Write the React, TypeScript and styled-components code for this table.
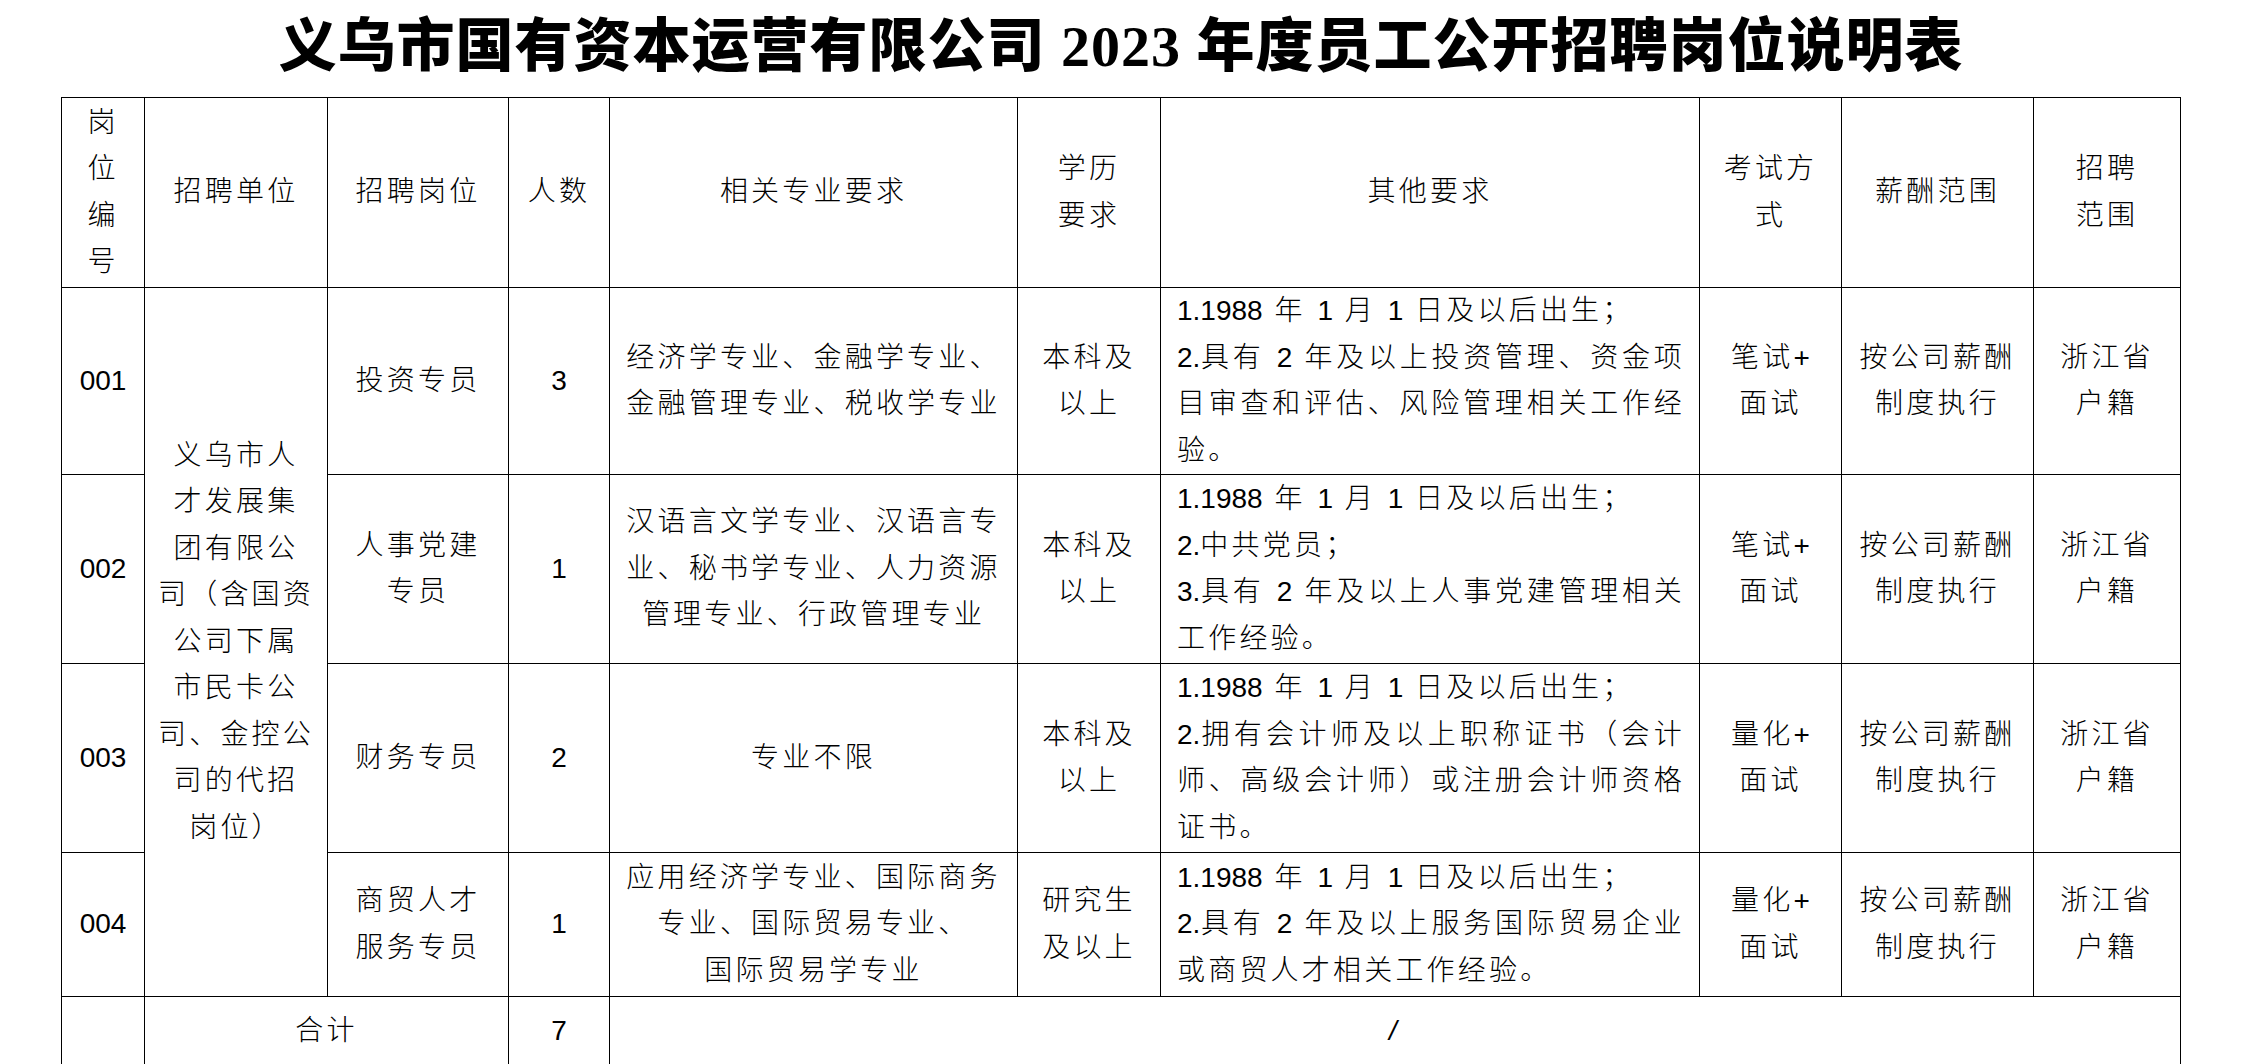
import React from "react";
import styled, { createGlobalStyle, css } from "styled-components";

/**
 * 招聘岗位说明表
 */
type Post = {
    no: string;
    post: string[];
    count: string;
    major: string[];
    edu: string[];
    other: string[][]; // 每段若干行，除末行外两端对齐
    exam: string[];
    height: number;
};

const born = ["1.1988 年 1 月 1 日及以后出生；"];

const unit = ["义乌市人", "才发展集", "团有限公", "司（含国资", "公司下属", "市民卡公", "司、金控公", "司的代招", "岗位）"];

const posts: Post[] = [
    {
        no: "001",
        post: ["投资专员"],
        count: "3",
        major: ["经济学专业、金融学专业、", "金融管理专业、税收学专业"],
        edu: ["本科及", "以上"],
        other: [born, ["2.具有 2 年及以上投资管理、资金项", "目审查和评估、风险管理相关工作经", "验。"]],
        exam: ["笔试+", "面试"],
        height: 186
    },
    {
        no: "002",
        post: ["人事党建", "专员"],
        count: "1",
        major: ["汉语言文学专业、汉语言专", "业、秘书学专业、人力资源", "管理专业、行政管理专业"],
        edu: ["本科及", "以上"],
        other: [born, ["2.中共党员；"], ["3.具有 2 年及以上人事党建管理相关", "工作经验。"]],
        exam: ["笔试+", "面试"],
        height: 189
    },
    {
        no: "003",
        post: ["财务专员"],
        count: "2",
        major: ["专业不限"],
        edu: ["本科及", "以上"],
        other: [born, ["2.拥有会计师及以上职称证书（会计", "师、高级会计师）或注册会计师资格", "证书。"]],
        exam: ["量化+", "面试"],
        height: 189
    },
    {
        no: "004",
        post: ["商贸人才", "服务专员"],
        count: "1",
        major: ["应用经济学专业、国际商务", "专业、国际贸易专业、", "国际贸易学专业"],
        edu: ["研究生", "及以上"],
        other: [born, ["2.具有 2 年及以上服务国际贸易企业", "或商贸人才相关工作经验。"]],
        exam: ["量化+", "面试"],
        height: 144
    }
];

const colWidths = [83, 183, 181, 101, 408, 143, 539, 142, 192, 147];

// 数字、字母不加字距，汉字加字距
const Text = ({ value }: { value: string }) => (
    <>
        {value.split(/([\x20-\x7e]+)/).map((part, i) =>
            /^[\x20-\x7e]+$/.test(part) ? <Latin key={i}>{part}</Latin> : part
        )}
    </>
);

const Lines = ({ lines }: { lines: string[] }) => (
    <>
        {lines.map((line, i) => (
            <React.Fragment key={i}>
                {i > 0 && <br />}
                <Text value={line} />
            </React.Fragment>
        ))}
    </>
);

const Paragraphs = ({ paras }: { paras: string[][] }) => (
    <>
        {paras.map((para, i) =>
            para.map((line, j) => (
                <ParaLine key={`${i}-${j}`} $fill={j < para.length - 1}>
                    <Text value={line} />
                </ParaLine>
            ))
        )}
    </>
);

const App = () => {
    return (
        <Page>
            <GlobalStyle />
            <Title>义乌市国有资本运营有限公司 2023 年度员工公开招聘岗位说明表</Title>
            <Sheet>
                <colgroup>
                    {colWidths.map((w, i) => <col key={i} style={{ width: w }} />)}
                </colgroup>
                <thead>
                    <Row $h={190}>
                        <HeadCell><Lines lines={["岗", "位", "编", "号"]} /></HeadCell>
                        <HeadCell>招聘单位</HeadCell>
                        <HeadCell>招聘岗位</HeadCell>
                        <HeadCell>人数</HeadCell>
                        <HeadCell>相关专业要求</HeadCell>
                        <HeadCell><Lines lines={["学历", "要求"]} /></HeadCell>
                        <HeadCell>其他要求</HeadCell>
                        <HeadCell><Lines lines={["考试方", "式"]} /></HeadCell>
                        <HeadCell>薪酬范围</HeadCell>
                        <HeadCell><Lines lines={["招聘", "范围"]} /></HeadCell>
                    </Row>
                </thead>
                <tbody>
                    {posts.map((p, i) => (
                        <Row key={p.no} $h={p.height}>
                            <Cell><Text value={p.no} /></Cell>
                            {i === 0 && (
                                <Cell rowSpan={posts.length}><Lines lines={unit} /></Cell>
                            )}
                            <Cell><Lines lines={p.post} /></Cell>
                            <Cell><Text value={p.count} /></Cell>
                            <Cell><Lines lines={p.major} /></Cell>
                            <Cell><Lines lines={p.edu} /></Cell>
                            <Cell $align="left"><Paragraphs paras={p.other} /></Cell>
                            <Cell><Lines lines={p.exam} /></Cell>
                            <Cell><Lines lines={["按公司薪酬", "制度执行"]} /></Cell>
                            <Cell><Lines lines={["浙江省", "户籍"]} /></Cell>
                        </Row>
                    ))}
                    <Row $h={70}>
                        <Cell />
                        <Cell colSpan={2}>合计</Cell>
                        <Cell><Text value="7" /></Cell>
                        <Cell colSpan={6}><Slash>/</Slash></Cell>
                    </Row>
                </tbody>
            </Sheet>
        </Page>
    );
};

const GlobalStyle = createGlobalStyle`
    body {
        margin: 0;
        background: #fff;
    }
`;

const Page = styled.main`
    background: #fff;
    color: #000;
`;

const Title = styled.h1`
    margin: 0;
    height: 97px;
    line-height: 94px;
    text-align: center;
    font-family: "Liberation Serif", "Noto Sans CJK SC", serif;
    font-size: 58px;
    font-weight: 900;
    letter-spacing: 1px;
    color: #000;
`;

const Sheet = styled.table`
    width: 2119px;
    margin: 0 auto;
    border-collapse: collapse;
    table-layout: fixed;
    font-family: "Liberation Sans", "Noto Sans CJK SC", sans-serif;
    font-size: 28px;
    font-weight: 300;
    letter-spacing: 3.2px;
    line-height: 46.5px;
    color: #000;
`;

const Latin = styled.span`
    letter-spacing: 0;
    word-spacing: 4px;
`;

const ParaLine = styled.div<{ $fill: boolean }>`
    text-align: justify;
    text-align-last: ${(p) => (p.$fill ? "justify" : "left")};
`;

const Slash = styled.span`
    display: inline-block;
    letter-spacing: 0;
    font-style: italic;
    font-family: "Liberation Sans", sans-serif;
    transform: translateX(-2px);
`;

const Row = styled.tr<{ $h: number }>`
    height: ${(p) => p.$h}px;
`;

const cellBase = css<{ $align?: "left" | "center" }>`
    border: 1px solid #000;
    padding: ${(p) => (p.$align === "left" ? "0 14px 0 16px" : "0 2px")};
    text-align: ${(p) => p.$align ?? "center"};
    vertical-align: middle;
    white-space: nowrap;
    font-weight: inherit;
`;

const Cell = styled.td<{ $align?: "left" | "center" }>`
    ${cellBase}
`;

const HeadCell = styled.th<{ $align?: "left" | "center" }>`
    ${cellBase}
`;

export default App;
